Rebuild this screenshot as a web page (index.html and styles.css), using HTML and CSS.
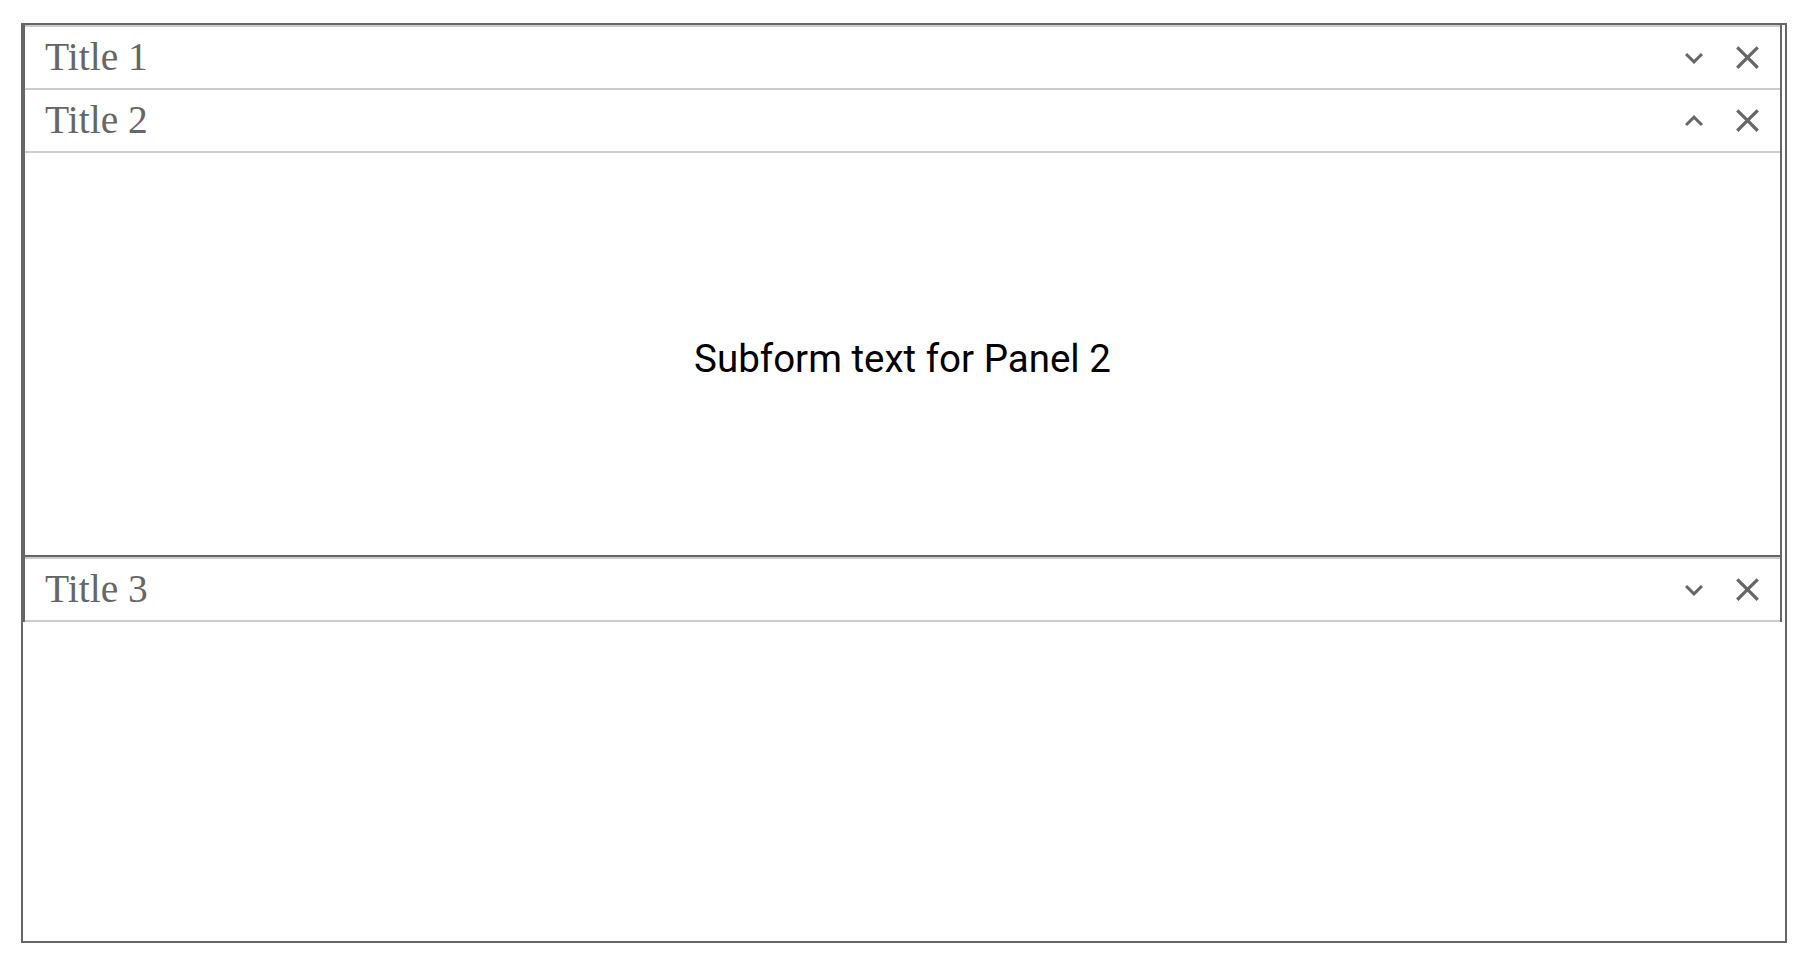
FILE: index.html
```html
<!DOCTYPE html>
<html>
<head>
<meta charset="utf-8">
<link rel="stylesheet" href="styles.css">
</head>
<body>
<div class="page">
  <div class="container">
    <div class="panel">
      <div class="panel-header">
        <span class="title">Title 1</span>
        <div class="actions">
          <svg class="icon" viewBox="0 0 24 24"><path d="M16.59 8.59L12 13.17 7.41 8.59 6 10l6 6 6-6z"/></svg>
          <svg class="icon close" viewBox="0 0 24 24"><path d="M19 6.41L17.59 5 12 10.59 6.41 5 5 6.41 10.59 12 5 17.59 6.41 19 12 13.41 17.59 19 19 17.59 13.41 12z"/></svg>
        </div>
      </div>
    </div>
    <div class="panel">
      <div class="panel-header">
        <span class="title">Title 2</span>
        <div class="actions">
          <svg class="icon" viewBox="0 0 24 24"><path d="M12 8l-6 6 1.41 1.41L12 10.83l4.59 4.58L18 14z"/></svg>
          <svg class="icon close" viewBox="0 0 24 24"><path d="M19 6.41L17.59 5 12 10.59 6.41 5 5 6.41 10.59 12 5 17.59 6.41 19 12 13.41 17.59 19 19 17.59 13.41 12z"/></svg>
        </div>
      </div>
      <div class="panel-body">Subform text for Panel 2</div>
    </div>
    <div class="panel last">
      <div class="panel-header">
        <span class="title">Title 3</span>
        <div class="actions">
          <svg class="icon" viewBox="0 0 24 24"><path d="M16.59 8.59L12 13.17 7.41 8.59 6 10l6 6 6-6z"/></svg>
          <svg class="icon close" viewBox="0 0 24 24"><path d="M19 6.41L17.59 5 12 10.59 6.41 5 5 6.41 10.59 12 5 17.59 6.41 19 12 13.41 17.59 19 19 17.59 13.41 12z"/></svg>
        </div>
      </div>
    </div>
  </div>
</div>
</body>
</html>
```
FILE: styles.css
```css
html, body {
  margin: 0;
  padding: 0;
  background: #fff;
}
.page {
  padding: 23px 0 0 21px;
}
.container {
  box-sizing: border-box;
  width: 1766px;
  height: 920px;
  border: 2px solid #666;
  display: flex;
  flex-direction: column;
}
.panel {
  box-sizing: border-box;
  width: calc(100% - 3px);
  border-left: 2px solid #666;
  border-right: 2px solid #666;
}
.panel-header {
  height: 61px;
  border-top: 2px solid #ccc;
  display: flex;
  align-items: center;
  justify-content: space-between;
  padding: 0 13px 0 20px;
}
.panel.last .panel-header {
  border-bottom: 2px solid #ccc;
}
.title {
  font-family: "Liberation Serif", "Times New Roman", serif;
  font-size: 39.5px;
  color: #666;
  margin-top: -2px;
}
.actions {
  display: flex;
  align-items: center;
  gap: 16px;
}
.icon {
  width: 36px;
  height: 36px;
  fill: #666;
  display: block;
}
.icon.close {
  width: 39px;
  height: 39px;
}
.panel-body {
  box-sizing: border-box;
  height: 406px;
  padding-top: 8px;
  border-top: 2px solid #ccc;
  border-bottom: 2px solid #666;
  display: flex;
  align-items: center;
  justify-content: center;
  font-family: Roboto, "Noto Sans", sans-serif;
  font-size: 38.5px;
  color: #000;
}
```
